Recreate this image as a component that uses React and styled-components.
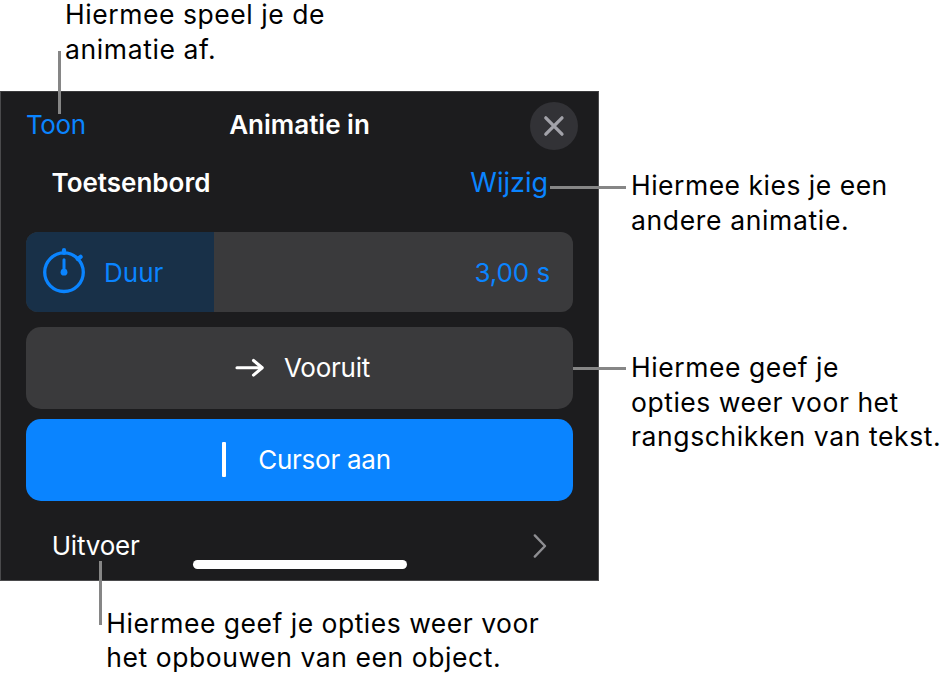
import React from "react";
import styled, { createGlobalStyle } from "styled-components";

const noteLines = {
    play: [
        { text: "Hiermee speel je de", tracking: 0.55 },
        { text: "animatie af.", tracking: 0.62 },
    ],
    change: [
        { text: "Hiermee kies je een", tracking: 0.5 },
        { text: "andere animatie.", tracking: 0.65 },
    ],
    order: [
        { text: "Hiermee geef je", tracking: 0.55 },
        { text: "opties weer voor het", tracking: 0.54 },
        { text: "rangschikken van tekst.", tracking: 0.6 },
    ],
    build: [
        { text: "Hiermee geef je opties weer voor", tracking: 0.5 },
        { text: "het opbouwen van een object.", tracking: 0.56 },
    ],
};

const Note = ({ lines }) => (
    <NoteText>
        {lines.map((line) => (
            <NoteLine key={line.text} $tracking={line.tracking}>
                {line.text}
            </NoteLine>
        ))}
    </NoteText>
);

const CloseIcon = () => (
    <svg width="48" height="48" viewBox="0 0 48 48" fill="none">
        <path
            d="M15.8 15.8L32 32.2M32 15.8L15.8 32.2"
            stroke="#a2a2a9"
            strokeWidth="3.3"
            strokeLinecap="round"
        />
    </svg>
);

const TimerIcon = () => (
    <svg width="44" height="48" viewBox="0 0 44 48" fill="none">
        <g stroke="#0a84ff" strokeLinecap="round">
            <circle cx="22" cy="25.2" r="19.3" strokeWidth="3.3" />
            <path d="M22 3.2V6" strokeWidth="4.2" />
            <path d="M35.8 12L38.6 9.8" strokeWidth="4.2" />
            <path d="M22 12.8V24" strokeWidth="3" />
        </g>
        <circle cx="22" cy="25.2" r="3.4" fill="#0a84ff" />
    </svg>
);

const ArrowIcon = () => (
    <svg width="30" height="20" viewBox="0 0 30 20" fill="none">
        <g
            stroke="#fff"
            strokeWidth="3.1"
            strokeLinecap="round"
            strokeLinejoin="round"
        >
            <path d="M2 9.8H26.5" />
            <path d="M18.5 2.5L27.2 9.8L18.5 17.1" />
        </g>
    </svg>
);

const ChevronIcon = () => (
    <svg width="14" height="26" viewBox="0 0 14 26" fill="none">
        <path
            d="M1.8 2.4L12 13L1.8 23.6"
            stroke="#8e8e92"
            strokeWidth="2.4"
            strokeLinecap="round"
            strokeLinejoin="round"
        />
    </svg>
);

const App = () => {
    return (
        <>
            <GlobalStyle />
            <Page>
                <TopNote>
                    <Note lines={noteLines.play} />
                </TopNote>
                <Middle>
                    <Panel>
                        <Header>
                            <Action $tracking={-0.4}>Toon</Action>
                            <Title>Animatie in</Title>
                            <CloseButton aria-label="Sluit">
                                <CloseIcon />
                            </CloseButton>
                        </Header>
                        <EffectRow>
                            <Title>Toetsenbord</Title>
                            <Action $size={27}>Wijzig</Action>
                        </EffectRow>
                        <Duration>
                            <DurationFill>
                                <TimerIcon />
                                <Label>Duur</Label>
                            </DurationFill>
                            <DurationValue>
                                <Label $tracking={-0.1}>3,00 s</Label>
                            </DurationValue>
                        </Duration>
                        <DirectionButton>
                            <ArrowIcon />
                            <Label $tracking={-0.25}>Vooruit</Label>
                        </DirectionButton>
                        <CursorButton>
                            <Caret />
                            <Label $tracking={-0.25}>Cursor aan</Label>
                        </CursorButton>
                        <DeliveryRow>
                            <Label $tracking={-0.2}>Uitvoer</Label>
                            <ChevronIcon />
                        </DeliveryRow>
                        <HomeIndicator />
                    </Panel>
                    <SideNotes>
                        <Note lines={noteLines.change} />
                        <Note lines={noteLines.order} />
                    </SideNotes>
                </Middle>
                <BottomNote>
                    <Note lines={noteLines.build} />
                </BottomNote>
                <Leader $x={57.8} $y={51} $height={63} />
                <Leader $x={550} $y={186} $width={75.5} />
                <Leader $x={573} $y={367} $width={52.5} />
                <Leader $x={99} $y={561} $height={63.5} />
            </Page>
        </>
    );
};

const GlobalStyle = createGlobalStyle`
    * {
        box-sizing: border-box;
    }
    body {
        margin: 0;
        background: #fff;
        font-family: Inter, "Liberation Sans", sans-serif;
    }
    svg {
        display: block;
        flex: none;
    }
    button {
        border: 0;
        padding: 0;
        font-family: inherit;
    }
`;

const Page = styled.main`
    position: relative;
    display: flex;
    flex-direction: column;
    width: 950px;
    height: 681px;
`;

const NoteText = styled.p`
    display: flex;
    flex-direction: column;
    gap: 6px;
    margin: 0;
    color: #000;
    font-size: 26.5px;
    line-height: 28.7px;
`;

const NoteLine = styled.span`
    white-space: nowrap;
    letter-spacing: ${({ $tracking }) => $tracking}px;
`;

const TopNote = styled.div`
    height: 91px;
    padding-left: 65px;
`;

const Middle = styled.div`
    display: flex;
    height: 490px;
`;

const Panel = styled.section`
    display: flex;
    flex-direction: column;
    width: 599px;
    padding: 10px 25px 0 24.5px;
    border: 1px solid #4a4a4c;
    border-top-color: #3a3a3c;
    background: #1c1c1e;
`;

const SideNotes = styled.div`
    display: flex;
    flex-direction: column;
    gap: 118.3px;
    padding: 80.3px 0 0 32px;
`;

const BottomNote = styled.div`
    padding: 27.5px 0 0 106.3px;
`;

const Label = styled.span`
    font-size: ${({ $size = 26 }) => $size}px;
    line-height: 32px;
    letter-spacing: ${({ $tracking = 0 }) => $tracking}px;
    white-space: nowrap;
`;

const Action = styled(Label)`
    color: #0a84ff;
`;

const Title = styled(Label)`
    color: #fff;
    font-weight: 600;
`;

const Header = styled.header`
    display: grid;
    grid-template-columns: 1fr auto 1fr;
    align-items: center;
    height: 48px;
    margin-right: -5px;
    padding-left: 0.5px;
    ${Label} {
        padding-bottom: 2px;
    }
    ${Title} {
        margin: 0 5px 0 0;
    }
`;

const CloseButton = styled.button`
    justify-self: end;
    width: 48px;
    height: 48px;
    border-radius: 50%;
    background: #323236;
`;

const EffectRow = styled.div`
    display: flex;
    align-items: center;
    justify-content: space-between;
    height: 65px;
    margin-bottom: 17.3px;
    padding: 0 25px 0 26px;
`;

const Duration = styled.div`
    display: flex;
    flex: none;
    height: 79.7px;
    overflow: hidden;
    border-radius: 12px;
    background: #3a3a3c;
    color: #0a84ff;
    ${Label} {
        padding-top: 1.4px;
    }
`;

const DurationFill = styled.div`
    display: flex;
    align-items: center;
    gap: 18px;
    width: 188.5px;
    padding-left: 16.5px;
    background: #183048;
    svg {
        margin-bottom: 3px;
    }
`;

const DurationValue = styled.div`
    display: flex;
    flex: 1;
    align-items: center;
    justify-content: flex-end;
    padding-right: 23px;
`;

const OptionButton = styled.button`
    display: flex;
    flex: none;
    align-items: center;
    height: 82px;
    border-radius: 15px;
    color: #fff;
`;

const DirectionButton = styled(OptionButton)`
    gap: 19.5px;
    margin-top: 15px;
    padding-left: 209px;
    background: #3a3a3c;
`;

const CursorButton = styled(OptionButton)`
    gap: 32px;
    margin-top: 9.6px;
    padding-left: 196.7px;
    background: #0a84ff;
    ${Label} {
        padding-top: 1.4px;
    }
`;

const Caret = styled.span`
    width: 4px;
    height: 35px;
    border-radius: 1px;
    background: #fff;
`;

const DeliveryRow = styled.div`
    display: flex;
    align-items: center;
    justify-content: space-between;
    height: 30px;
    margin-top: 30.3px;
    padding: 0 25.7px 0 26.2px;
    color: #fff;
`;

const HomeIndicator = styled.div`
    width: 214px;
    height: 8.5px;
    margin: -0.7px 0 0 167.5px;
    border-radius: 5px;
    background: #fff;
`;

/* callout line running over the panel edge */
const Leader = styled.span`
    position: absolute;
    left: ${({ $x }) => $x}px;
    top: ${({ $y }) => $y}px;
    width: ${({ $width = 3 }) => $width}px;
    height: ${({ $height = 3 }) => $height}px;
    background: #868686;
`;

export default App;
